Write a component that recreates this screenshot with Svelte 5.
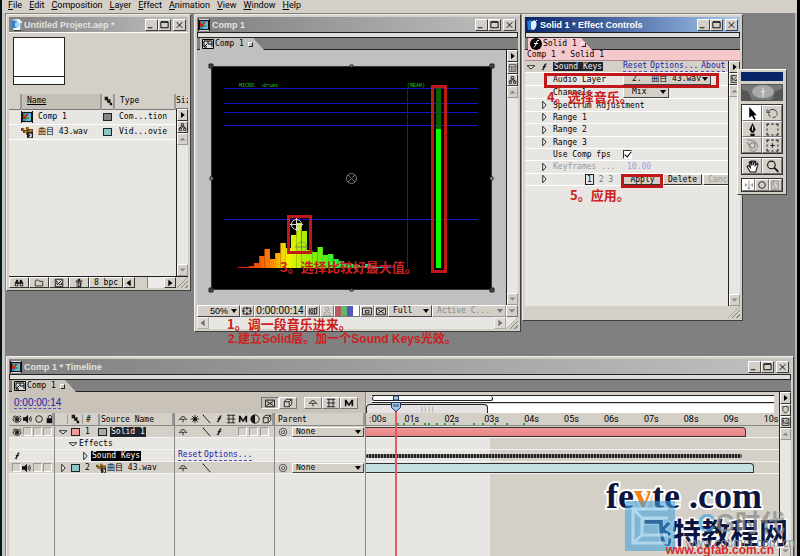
<script lang="ts">
  type Shape = { d: string; fill?: string; stroke?: string };

  const menus = ["File", "Edit", "Composition", "Layer", "Effect", "Animation", "View", "Window", "Help"];

  const icons: Record<string, Shape[]> = {
    comp: [
      { d: "M0 0h12v12H0z", fill: "#111" },
      { d: "M2 2h8v8H2z", fill: "#3a8fd0" },
      { d: "M2 3h5v5H2z", fill: "#c22" },
      { d: "M6 5l4-3v8H5z", fill: "#6bd" },
      { d: "M3 3h2v2H3zM5 6h3v2H5z", fill: "#3a3" },
      { d: "M1 .5h10M1 11.5h10", stroke: "#ddd" },
    ],
    project: [
      { d: "M1 1l8-1 3 3v8l-8 1z", fill: "#f4f8fc" },
      { d: "M1 1l6 1v7H2z", fill: "#2a7fc8" },
      { d: "M5 4c3-3 5 0 4 3s-4 2-4 0z", fill: "#9cd4f4" },
      { d: "M4 11.5h7V4", stroke: "#333" },
    ],
    solid: [
      { d: "M1 2l5-1v10H2z", fill: "#2878c8" },
      { d: "M5 3c4-3 7 0 5 5s-5 3-5 0z", fill: "#d8f0ff" },
      { d: "M8 1l1 2 2-2", stroke: "#fff" },
    ],
    wav: [
      { d: "M0 2h3v2h2V1h3v2h4v4H9v2H5V7H2V5H0z", fill: "#6e4a18" },
      { d: "M2 3h2M6 2h2M8 5h3M4 6h2", stroke: "#e0a33a" },
      { d: "M6 6h6v6H6z", fill: "#222" },
      { d: "M8 8h2v3H8M10 8v3", stroke: "#eee" },
    ],
    tab: [
      { d: "M.5 1.5h11v9H.5z", fill: "#ddd", stroke: "#000" },
      { d: "M2 3h4v3h4v3M2 9l3-3M6 3h4v3M2 3v6h3", stroke: "#000" },
    ],
    fx: [
      { d: "M6 0a6 6 0 110 12A6 6 0 016 0z", fill: "#000" },
      { d: "M9 2.500q-2-1-2.500 2T4 9.500M4 5.500h4", stroke: "#fff" },
    ],
    f: [{ d: "M9 2.500q-2-1-2.700 2T3.500 9.500M4.500 5.500h4M8 2L5 10", stroke: "#000" }],
    down: [{ d: "M1.500 4.500h9L6 8.500z", fill: "#fff", stroke: "#000" }],
    right: [{ d: "M4.500 1.500v9L8.500 6z", fill: "#fff", stroke: "#000" }],
    play: [{ d: "M4 2v8l5-4z", fill: "#000" }],
    back: [{ d: "M8 2v8L3 6z", fill: "#000" }],
    up: [{ d: "M2 8h8L6 4z", fill: "#888" }],
    low: [{ d: "M2 4h8L6 8z", fill: "#888" }],
    tree: [{ d: "M4.500 1.500h3v3h-3zM1.500 7.500h3v3h-3zM7.500 7.500h3v3h-3zM6 4.500V6M3 7.500V6h6v1.500", stroke: "#000" }],
    panel: [{ d: "M1.500 1.500h9v9h-9zM1.500 4.500h9M4.500 5v5", stroke: "#333" }, { d: "M5 5h5v5H5z", fill: "#999" }],
    check: [{ d: "M1.500 1.500h9v9h-9zM3 3l1 5M4 8l5-5M6 8h3V6", stroke: "#000" }],
    label: [{ d: "M2 1h4v4H2zM5 4h4v4H5zM8 8h3v3H8z", fill: "#111" }, { d: "M3 2h1v1H3zM6 5h1v1H6z", fill: "#c33" }],
    find: [{ d: "M1 6l2-4h2v8H1zM7 2h2l2 4v4H7zM5 5h2v2H5z", fill: "#111" }, { d: "M2 7h2v2H2zM8 7h2v2H8z", fill: "#ddd" }],
    folder: [{ d: "M1.500 9.500v-6l1-1h3l1 1.500h4v5.500z", stroke: "#222" }],
    trash: [{ d: "M2 3h8v1.500H2zM4.500 1h3v2h-3zM3 5h6l-.5 6h-5z", fill: "#222" }, { d: "M4.500 6v4M6.500 6v4", stroke: "#ccc" }],
    safe: [{ d: "M1.500 2.500h9v7h-9zM6 1v4M6 7v4M0 6h4M8 6h4", stroke: "#000" }],
    camera: [{ d: "M1.500 3.500h7l2-2v8h-9zM8 3v7", stroke: "#000" }, { d: "M4.500 5a1.500 1.500 0 110 3 1.500 1.500 0 010-3z", stroke: "#000" }],
    person: [{ d: "M6 1.500a2 2 0 110 4 2 2 0 010-4zM2 11q0-4 4-4t4 4z", stroke: "#999" }],
    region: [{ d: "M.5 2.500h11v8H.5zM4 5.500h4.500v3H4z", stroke: "#000" }],
    alpha: [{ d: "M.5 2.500h11v8H.5zM2 4l8 5M10 4L2 9", stroke: "#000" }],
    eye: [{ d: "M1 7q5-8 10 0-5 6-10 0zM1 4l3-2M9 2l2 2", stroke: "#000" }, { d: "M6 4a2.500 2.500 0 110 5 2.500 2.500 0 010-5z", fill: "#222" }],
    sound: [{ d: "M0 4h3l3-3v10L3 8H0z", fill: "#111" }, { d: "M7.500 4v4M9 2.500q2 3.500 0 7", stroke: "#111" }],
    ring: [{ d: "M6 2a4 4 0 110 8 4 4 0 010-8z", stroke: "#111" }],
    lock: [{ d: "M2 5h8v6H2z", fill: "#111" }, { d: "M4 5V2.500q2-2 4 0V5", stroke: "#111" }],
    shy: [{ d: "M1 6.500h2Q3 3 6 3t3 3.500h2M4 6.500h4M6 7v3", stroke: "#111" }],
    sun: [{ d: "M6 1v10M1 6h10M2.500 2.500l7 7M9.500 2.500l-7 7", stroke: "#111" }, { d: "M4 4h4v4H4z", fill: "#111" }],
    line: [{ d: "M1 1l9 10M1.500 1.500h1", stroke: "#000" }],
    film: [{ d: "M1 1.500h10M1 10.500h10M3.500 1v10M8.500 1v10M1 6h10", stroke: "#111" }],
    blur: [{ d: "M1 10V2h2l3 5 3-5h2v8H9V6l-3 4-3-4v4z", fill: "#111" }],
    half: [{ d: "M6 1a5 5 0 110 10A5 5 0 016 1z", stroke: "#111" }, { d: "M6 1a5 5 0 000 10z", fill: "#111" }],
    cube: [{ d: "M1.500 4.500h6v6h-6zM4 1.500h6.500v6M1.500 4.500l2.500-3M7.500 4.500l3-3M7.500 10.500l3-3", stroke: "#111" }],
    whip: [{ d: "M6 1.500a4.500 4.500 0 110 9 4.500 4.500 0 010-9zM6 4a2 2 0 11-2 2q0-1 2-1", stroke: "#444" }],
    shield: [{ d: "M2.500 1.500h7v5L6 10.500 2.500 6.500z", stroke: "#222" }],
    select: [{ d: "M3 0v10l2.500-2 2 4 1.500-1-2-3.500h3z", fill: "#000" }],
    rotate: [{ d: "M2 5a4 4 0 118 3M9 9l-3 1M2 6l2 3M1 2v3h3", stroke: "#555" }],
    pen: [{ d: "M6 0L3 6l2 3h2l2-3zM4 10h4v2H4z", fill: "#111" }, { d: "M6 3v4", stroke: "#ddd" }],
    rect: [{ d: "M1 3V1h2M5 1h2M9 1h2v2M11 5v2M11 9v2H9M7 11H5M3 11H1V9M1 7V5", stroke: "#222" }],
    orbit: [{ d: "M6 3.500a2.500 2.500 0 110 5 2.500 2.500 0 010-5zM1 3l3 5M1 1q9-1 10 7M3 10q5 3 7-1", stroke: "#888" }],
    pan: [{ d: "M1 3V1h2M5 1h2M9 1h2v2M11 5v2M11 9v2H9M7 11H5M3 11H1V9M1 7V5M4 6h4M6 4v4", stroke: "#222" }],
    hand: [{ d: "M4 11L1 6l1-1 2 2-1-5 1-.5L5 5V1h1.500v4L8 1l1 .5L8.500 5l2-2 .5 1-2 7z", fill: "#fff", stroke: "#111" }],
    lens: [{ d: "M5 1a3.500 3.500 0 110 7 3.500 3.500 0 010-7zM7.500 7.500l4 4M8 7l3.500 3.500", stroke: "#111" }],
    axis: [{ d: "M6 1v10M1 6h3M8 6h3M2 4v4M10 4v4M4 9l2 2 2-2", stroke: "#777" }],
    view: [{ d: "M2 1h8v10H2zM4 1v6l3 3M7 3l3 3", stroke: "#888" }],
  };

  const footage = [
    { name: "Comp 1", icon: "comp", type: "Com...tion", color: "#858585" },
    { name: "曲目 43.wav", icon: "wav", type: "Vid...ovie", color: "#8cc8c8" },
  ];

  const tools = ["select", "rotate", "pen", "rect", "orbit", "pan"];
  const seconds = [":00s", "01s", "02s", "03s", "04s", "05s", "06s", "07s", "08s", "09s", "10s"];
  const ranges = ["Spectrum Adjustment", "Range 1", "Range 2", "Range 3"];
  const markers = [7.5, 9, 11.5, 14, 15, 17, 19, 21, 26, 28, 31, 34, 38];

  // heights of the spectrum columns, left to right
  const spectrum = [1, 1, 2, 5, 12, 19, 9, 15, 25, 20, 33, 45, 37, 18, 16, 21, 13, 14, 9, 7, 5, 4, 3, 2, 4, 2, 1, 1, 1];

  let useFps = $state(true);
  let currentTime = $state("0:00:00:14");
</script>

{#snippet icon(name: string)}
  <svg class="icon" viewBox="0 0 12 12" aria-hidden="true">
    {#each icons[name] as s}
      <path d={s.d} fill={s.fill ?? "none"} stroke={s.stroke ?? "none"} />
    {/each}
  </svg>
{/snippet}

{#snippet titlebar(title: string, name: string)}
  <header class="titlebar">
    {@render icon(name)}
    <h2>{title}</h2>
    <button aria-label="Minimize"><svg viewBox="0 0 12 10"><path d="M2 8h5" /></svg></button>
    <button aria-label="Maximize"><svg viewBox="0 0 12 10"><path d="M2 2h8v6H2zM2 1.500h8" /></svg></button>
    <button class="close" aria-label="Close"><svg viewBox="0 0 12 10"><path d="M3 2l6 6M9 2L3 8" /></svg></button>
  </header>
{/snippet}

{#snippet tabstrip(title: string, name: string)}
  <div class="groove"></div>
  <div class="tabs">
    <button class="tab">{@render icon(name)}{title}<i></i></button>
  </div>
{/snippet}

{#snippet scroller(names: string[])}
  <div class="scroller">
    {#each names as name}
      <button aria-label={name}>{@render icon(name)}</button>
    {/each}
    <button aria-label="Scroll up" class="flat">{@render icon("up")}</button>
    <span class="fill"></span>
    <button aria-label="Scroll down" class="flat">{@render icon("low")}</button>
  </div>
{/snippet}

<main>
  <nav>
    {#each menus as m}
      <button><u>{m[0]}</u>{m.slice(1)}</button>
    {/each}
  </nav>

  <section class="window project">
    {@render titlebar("Untitled Project.aep *", "project")}
    <div class="preview"><div class="thumb"></div></div>
    <div class="split">
      <div class="list">
        <table>
          <thead>
            <tr><th></th><th class="sorted">Name</th><th>{@render icon("label")}</th><th>Type</th></tr>
          </thead>
          <tbody>
            {#each footage as item}
              <tr>
                <td></td>
                <td><span class="cell">{@render icon(item.icon)}{item.name}</span></td>
                <td><b class="swatch" style="background: {item.color}"></b></td>
                <td>{item.type}</td>
              </tr>
            {/each}
          </tbody>
        </table>
      </div>
      <div class="side">
        <div class="size">Siz</div>
        {@render scroller(["play", "tree"])}
      </div>
    </div>
    <footer class="bar">
      {#each ["find", "folder", "check", "trash"] as name}
        <button aria-label={name}>{@render icon(name)}</button>
      {/each}
      <button class="depth">8 bpc</button>
      <button class="arrow" aria-label="Scroll left">{@render icon("back")}</button>
      <span class="thumbtrack"></span>
      <button class="arrow" aria-label="Scroll right">{@render icon("play")}</button>
      <span class="grip"></span>
    </footer>
  </section>

  <section class="window comp">
    {@render titlebar("Comp 1", "comp")}
    {@render tabstrip("Comp 1", "tab")}
    <div class="split">
      <div class="viewer">
        <svg viewBox="0 0 281 224">
          <defs>
            <linearGradient id="heat" gradientUnits="userSpaceOnUse" x1="28" y1="0" x2="180" y2="0">
              <stop offset="0" stop-color="#e01010" />
              <stop offset=".22" stop-color="#ff8c00" />
              <stop offset=".32" stop-color="#f4f000" />
              <stop offset=".5" stop-color="#80f000" />
              <stop offset=".7" stop-color="#00f050" />
              <stop offset=".9" stop-color="#30e8d0" />
              <stop offset="1" stop-color="#2040f0" />
            </linearGradient>
          </defs>
          <rect width="281" height="224" />
          <path d="M13 22.500h254M13 37.500h254M13 46.500h254M13 59.500h254M13 153.500h254M196.500 22v180" fill="none" stroke="#1814cc" />
          <text x="28" y="21">MICRO. -drums</text>
          <text x="196" y="21">(MEAN)</text>
          <g fill="url(#heat)">
            {#each spectrum as h, i}
              <rect x={27 + i * 5.3} y={202 - h} width="5.4" height={h} />
            {/each}
          </g>
          <rect x="225" y="22" width="5" height="41" fill="#086008" />
          <rect x="225" y="63" width="5" height="139" fill="#0f0" />
          <g fill="none" stroke="#ddd">
            <circle cx="85.500" cy="158.500" r="5" />
            <path d="M85.500 152v13M79 158.500h13" />
            <circle cx="90.500" cy="181" r="5" stroke="#8a6" />
            <path d="M90.500 164v23M84 181h13" stroke="#684" />
            <circle cx="140.500" cy="112.500" r="5" stroke="#777" />
            <path d="M137 109l7 7M144 109l-7 7" stroke="#777" />
          </g>
          <path d="M.5 0v224M0 .5h281M0 223.500h281M280.500 0v224" stroke="#333" />
          <path d="M-2-2h4v4h-4zM279-2h4v4h-4zM-2 222h4v4h-4zM279 222h4v4h-4z" fill="#444" stroke="#222" />
          <path d="M139-1h3v2h-3zM139 223h3v2h-3zM-1 111h3v3h-3zM279 111h3v3h-3z" fill="#aaa" stroke="#222" />
        </svg>
      </div>
      {@render scroller(["play", "panel", "tree"])}
    </div>
    <div class="bar status">
      <label class="drop zoom"><select aria-label="Magnification"><option>50%</option></select></label>
      <button aria-label="Safe areas">{@render icon("safe")}</button>
      <button class="time">{currentTime}</button>
      <button aria-label="Snapshot">{@render icon("camera")}</button>
      <button aria-label="Show snapshot">{@render icon("person")}</button>
      <button class="rgb" aria-label="Channels"></button>
      <button aria-label="Region">{@render icon("region")}</button>
      <button aria-label="Transparency">{@render icon("alpha")}</button>
      <label class="drop full"><select aria-label="Resolution"><option>Full</option></select></label>
      <label class="drop camera"><select aria-label="View" disabled><option>Active C...</option></select></label>
      <button class="arrow" aria-label="More">{@render icon("low")}</button>
    </div>
    <div class="bar hscroll">
      <button class="arrow" aria-label="Scroll left">{@render icon("back")}</button>
      <span class="fill"></span>
      <button class="arrow" aria-label="Scroll right">{@render icon("play")}</button>
      <span class="grip"></span>
    </div>
  </section>

  <section class="window effects">
    {@render titlebar("Solid 1 * Effect Controls", "solid")}
    {@render tabstrip("Solid 1", "fx")}
    <div class="path">Comp 1 * Solid 1</div>
    <div class="split">
      <div class="params">
        <div class="rows">
          <div class="row head">
            <span class="twirls">{@render icon("down")}{@render icon("f")}</span>
            <span><mark>Sound Keys</mark></span>
            <span class="links"><a href="#reset">Reset</a><a href="#options">Options...</a><a href="#about" class="about">About</a></span>
          </div>
          <div class="row">
            <span></span><label for="audio">Audio Layer</label>
            <span class="drop audio"><select id="audio"><option>2.&nbsp; 曲目 43.wav</option></select></span>
          </div>
          <div class="row">
            <span></span><label for="channel">Channels</label>
            <span class="drop mix"><select id="channel"><option>Mix</option></select></span>
          </div>
          {#each ranges as name}
            <div class="row"><span class="twirls">{@render icon("right")}</span><span>{name}</span></div>
          {/each}
          <div class="row">
            <span></span><label for="fps">Use Comp fps</label>
            <input id="fps" type="checkbox" bind:checked={useFps} />
          </div>
          <div class="row dim"><span class="twirls">{@render icon("right")}</span><span>Keyframes ...</span><span class="value">10.00</span></div>
          <div class="row">
            <span class="twirls">{@render icon("right")}</span>
            <span class="pages"><b>1</b> 2 3</span>
            <span class="actions"><button>Apply</button><button>Delete</button><button disabled>Cancel</button></span>
          </div>
        </div>
      </div>
      {@render scroller(["play", "check"])}
    </div>
    <div class="bar"><span class="fill"></span><span class="grip"></span></div>
  </section>

  <aside class="toolbox">
    <div class="cap"></div>
    <svg class="photo" viewBox="0 0 40 16" preserveAspectRatio="none">
      <rect width="40" height="16" fill="#777" />
      <ellipse cx="21" cy="7" rx="11" ry="7" fill="#aaa" />
      <path d="M21 3v10M19 7h4" stroke="#eee" />
      <path d="M0 5l6 2 4 9H0zM40 4l-7 3-3 9h10z" fill="#555" />
    </svg>
    <div class="grid">
      {#each tools as t, i}<button aria-label={t} class:on={i === 0}>{@render icon(t)}</button>{/each}
    </div>
    <div class="grid">
      {#each ["hand", "lens"] as t}<button aria-label={t}>{@render icon(t)}</button>{/each}
    </div>
    <div class="grid three">
      {#each ["axis", "ring", "view"] as t, i}<button aria-label={t} class:on={i === 0}>{@render icon(t)}</button>{/each}
    </div>
  </aside>

  <section class="window timeline">
    {@render titlebar("Comp 1 * Timeline", "comp")}
    {@render tabstrip("Comp 1", "tab")}
    <div class="split">
      <div class="layers">
        <div class="tools">
          <a href="#time">{currentTime}</a>
          <span class="group">
            <button aria-label="Live update" class="in">{@render icon("alpha")}</button>
            <button aria-label="Draft 3D">{@render icon("cube")}</button>
          </span>
          <span class="group">
            <button aria-label="Hide shy">{@render icon("shy")}</button>
            <button aria-label="Frame blending">{@render icon("film")}</button>
            <button aria-label="Motion blur">{@render icon("blur")}</button>
          </span>
        </div>
        <div class="columns">
          <div class="col av">
            <div class="th">{@render icon("eye")}{@render icon("sound")}{@render icon("ring")}{@render icon("lock")}</div>
            <div class="tr tint">{@render icon("eye")}<i></i><i></i><i></i></div>
            <div class="tr"></div>
            <div class="tr">{@render icon("f")}</div>
            <div class="tr tint"><i></i>{@render icon("sound")}<i></i><i></i></div>
          </div>
          <div class="col source">
            <div class="th"><span class="gap"></span><span class="lab">{@render icon("label")}</span><span class="num">#</span><span>Source Name</span></div>
            <div class="tr tint">{@render icon("down")}<b class="swatch pink"></b><span class="no">1</span><b class="swatch grey"></b><mark>Solid 1</mark></div>
            <div class="tr deep">{@render icon("down")}Effects</div>
            <div class="tr deeper">{@render icon("right")}<mark class="black">Sound Keys</mark></div>
            <div class="tr tint">{@render icon("right")}<b class="swatch teal"></b><span class="no">2</span>{@render icon("wav")}<span>曲目 43.wav</span></div>
          </div>
          <div class="col switches">
            <div class="th">{#each ["shy", "sun", "line", "f", "film", "blur", "half", "cube"] as n}{@render icon(n)}{/each}</div>
            <div class="tr tint">{@render icon("shy")}<s></s>{@render icon("line")}{@render icon("f")}<s></s><i></i><i></i><i></i></div>
            <div class="tr"></div>
            <div class="tr"><a href="#fx-reset">Reset</a><a href="#fx-options">Options...</a></div>
            <div class="tr tint">{@render icon("shy")}<s></s>{@render icon("line")}</div>
          </div>
          <div class="col parent">
            <div class="th">Parent</div>
            <div class="tr tint">{@render icon("whip")}<label class="drop"><select aria-label="Parent of layer 1"><option>None</option></select></label></div>
            <div class="tr"></div>
            <div class="tr"></div>
            <div class="tr tint">{@render icon("whip")}<label class="drop"><select aria-label="Parent of layer 2"><option>None</option></select></label></div>
          </div>
        </div>
      </div>
      <div class="tracks">
        <div class="navigator"><div class="range"></div></div>
        <div class="work"><span>||||</span></div>
        <div class="ruler">
          <div class="seconds">{#each seconds as s}<span>{s}</span>{/each}</div>
          {#each markers as m}<i style="left: {m}%"></i>{/each}
        </div>
        <div class="lanes">
          <div class="lane"><div class="clip rose"></div></div>
          <div class="lane"></div>
          <div class="lane"><div class="keys"></div></div>
          <div class="lane"><div class="clip aqua"></div></div>
        </div>
        <div class="playhead">
          <svg viewBox="0 0 12 18"><path d="M3.500 1h5v4h-5zM1.500 7.500h9v5L6 16.500 1.500 12.500z" fill="#a4cdec" stroke="#235" /><path d="M4 9v3M6 9v3M8 9v3" stroke="#246" /></svg>
        </div>
      </div>
      {@render scroller(["play", "shield", "check"])}
    </div>
  </section>

  <div class="box meter"></div>
  <div class="box peak"></div>
  <div class="box layer"></div>
  <div class="box apply"></div>
  <p class="note n1">1。调一段音乐进来。</p>
  <p class="note n2">2.建立Solid层。加一个Sound Keys光效。</p>
  <p class="note n3">3。选择比较好最大值。</p>
  <p class="note n4">4。选择音乐。</p>
  <p class="note n5">5。应用。</p>

  <div class="brand fevte">fe<em>v</em>te .com</div>
  <div class="brand school">飞特教程网</div>
  <svg class="logo" viewBox="0 0 50 50">
    <path d="M0 0h50v50H0z" fill="#48a4dc" opacity=".6" />
    <path d="M43 8H8v34h35M17 17h26M17 17v17h26M8 8l9 9M8 42l9-8" fill="none" stroke="#c4e6f8" stroke-width="3" opacity=".7" />
  </svg>
  <div class="brand cg"><em>C</em>G时代</div>
  <div class="brand timer">www.cgtimer.com.cn</div>
  <div class="brand lab-url">www.cgfab.com.cn</div>
</main>

<style>
  :global(body) {
    margin: 0;
  }

  main {
    position: relative;
    min-height: 100vh;
    overflow: hidden;
    box-sizing: border-box;
    border-left: 2px solid #041418;
    border-right: 3px solid #000;
    background: #808080;
    box-shadow: inset 3px 0 #c8c4c2, inset -2px 0 #b8b8b8;
    font: 8px/12px "DejaVu Sans Mono", "Noto Sans CJK SC", monospace;
    color: #000;
  }

  main :global(*) {
    box-sizing: border-box;
  }

  button,
  select,
  input {
    margin: 0;
    padding: 0;
    border: 0;
    font: inherit;
    color: inherit;
    background: none;
    border-radius: 0;
  }

  a {
    color: #2020a8;
    text-decoration: none;
    border-bottom: 1px dashed #5050b8;
    line-height: 10px;
  }

  mark {
    padding: 0 1px;
    background: #20242c;
    color: #f0f0f0;
    line-height: 10px;
  }

  .icon {
    display: block;
    flex: none;
    width: 10px;
    height: 10px;
  }

  nav {
    display: flex;
    gap: 7px;
    height: 13px;
    padding-left: 6px;
    background: #d4d0c8;
    font: 9px/10px Roboto, sans-serif;
  }

  nav button {
    height: 10px;
  }

  .window {
    position: absolute;
    display: flex;
    flex-direction: column;
    padding: 2px;
    border: 1px solid;
    border-color: #f0eeea #404040 #404040 #f0eeea;
    background: #d4d0c8;
  }

  .project {
    left: 4px;
    top: 14px;
    width: 185px;
    height: 277px;
  }

  .comp {
    left: 192px;
    top: 14px;
    width: 327px;
    height: 318px;
  }

  .effects {
    left: 520px;
    top: 14px;
    width: 221px;
    height: 307px;
  }

  .timeline {
    left: 4px;
    right: 3px;
    top: 356px;
    bottom: -4px;
  }

  .titlebar {
    display: flex;
    flex: none;
    align-items: center;
    height: 15px;
    padding: 0 2px 0 1px;
    background: linear-gradient(90deg, #808080, #c0c0c0);
  }

  .effects .titlebar {
    background: linear-gradient(90deg, #0a246a, #a6caf0);
  }

  .titlebar .icon,
  .tab .icon {
    width: 12px;
    height: 12px;
  }

  .titlebar h2 {
    flex: 1;
    margin: 0 0 0 2px;
    overflow: hidden;
    white-space: nowrap;
    color: #e4e2de;
    font: bold 9px/14px "Liberation Sans", sans-serif;
  }

  .effects .titlebar h2 {
    color: #fff;
  }

  .titlebar button {
    width: 13px;
    height: 12px;
    border: 1px solid;
    border-color: #fff #404040 #404040 #fff;
    background: #d4d0c8;
  }

  .titlebar button svg {
    display: block;
    width: 11px;
    height: 10px;
    fill: none;
    stroke: #000;
  }

  .titlebar .close {
    margin-left: 2px;
  }

  .groove {
    flex: none;
    height: 6px;
    border: 1px solid #222;
    background: #e0dedb;
  }

  .tabs {
    flex: none;
    height: 12px;
    padding-left: 3px;
    border-bottom: 1px solid #222;
    background: #808080;
  }

  .tab {
    display: flex;
    align-items: center;
    gap: 1px;
    width: 64px;
    height: 12px;
    padding-left: 2px;
    background: #c0c0c0;
    white-space: nowrap;
    clip-path: polygon(0 0, 53px 0, 100% 100%, 0 100%);
  }

  .tab i {
    width: 5px;
    height: 5px;
    margin-left: 3px;
    border: 1px solid;
    border-color: #fff #222 #222 #fff;
  }

  .effects .tab,
  .path {
    background: #f4c8cc;
  }

  .timeline .tab {
    background: #c8c4bc;
  }

  .split {
    display: flex;
    flex: 1;
    min-height: 0;
  }

  .scroller {
    display: flex;
    flex: none;
    flex-direction: column;
    width: 12px;
    border-left: 1px solid #222;
    background: #e8e6e3;
  }

  .scroller button {
    flex: none;
    width: 11px;
    height: 12px;
    border: 1px solid;
    border-color: #fff #333 #333 #fff;
    background: #d4d0c8;
  }

  .scroller .icon {
    width: 9px;
    height: 10px;
  }

  .scroller .flat {
    border-color: #fff #999 #999 #fff;
  }

  .fill {
    flex: 1;
  }

  .bar {
    display: flex;
    flex: none;
    height: 12px;
    background: #d4d0c8;
  }

  .bar button {
    display: flex;
    align-items: center;
    justify-content: center;
    border: 1px solid;
    border-color: #fff #333 #333 #fff;
  }

  .grip {
    width: 12px;
    background: repeating-linear-gradient(135deg, #d4d0c8 0 2px, #888 2px 3px);
    clip-path: polygon(100% 0, 100% 100%, 0 100%);
  }

  .drop {
    position: relative;
    display: flex;
    border: 1px solid;
    border-color: #fff #444 #444 #fff;
    background: #d4d0c8;
  }

  .drop select {
    width: 100%;
    appearance: none;
    line-height: 10px;
    white-space: nowrap;
  }

  .drop::after {
    content: "";
    position: absolute;
    right: 2px;
    top: 3px;
    border: 3px solid transparent;
    border-top: 4px solid #000;
    border-bottom: 0;
    pointer-events: none;
  }

  .preview {
    flex: none;
    height: 62px;
    padding: 4px;
    border-top: 1px solid #fff;
  }

  .thumb {
    width: 52px;
    height: 48px;
    border: 1px solid #222;
    background: linear-gradient(#222, #222) 0 38px / 100% 1px no-repeat #fff;
  }

  .list {
    flex: 1;
    background: #e8e6e3;
  }

  table {
    width: 100%;
    table-layout: fixed;
    border-collapse: collapse;
  }

  th {
    height: 15px;
    padding: 0 0 0 5px;
    border-right: 2px solid #999;
    border-bottom: 1px solid #777;
    background: #d4d0c8;
    font-weight: normal;
    text-align: left;
  }

  th:nth-child(1) {
    width: 12px;
  }

  th:nth-child(2) {
    width: 80px;
  }

  th:nth-child(3) {
    width: 13px;
    padding: 0 1px;
  }

  th.sorted {
    background: #c4c0b8;
    text-decoration: underline;
  }

  td {
    height: 15px;
    padding: 0;
    border-bottom: 1px solid #fff;
    white-space: nowrap;
  }

  td:last-child {
    padding-left: 5px;
  }

  .cell {
    display: flex;
    align-items: center;
    gap: 5px;
    height: 14px;
    line-height: 14px;
  }

  .cell .icon {
    width: 12px;
    height: 12px;
  }

  .swatch {
    display: block;
    flex: none;
    width: 9px;
    height: 8px;
    margin: 0 2px;
    border: 1px solid #222;
  }

  .side {
    display: flex;
    flex-direction: column;
    width: 12px;
  }

  .size {
    height: 15px;
    overflow: hidden;
    border-bottom: 1px solid #777;
    line-height: 14px;
  }

  .side .scroller {
    flex: 1;
  }

  .project .bar {
    border-top: 1px solid #222;
  }

  .project .bar button {
    width: 20px;
  }

  .project .bar .depth {
    width: 34px;
  }

  .bar .arrow,
  .project .bar .arrow {
    width: 12px;
  }

  .thumbtrack {
    flex: 1;
    background: linear-gradient(90deg, #d4d0c8 12px, #888 12px 13px, #eceae8 13px);
  }

  .viewer {
    flex: 1;
    padding: 16px 14px;
    background: #c0c0c0;
  }

  .viewer svg {
    display: block;
    width: 281px;
    height: 224px;
    overflow: visible;
  }

  .viewer text {
    fill: #20c020;
    font: 5px "Liberation Mono", monospace;
  }

  .status button {
    width: 14px;
    border-color: #fff #777 #777 #fff;
  }

  .status .time {
    width: 52px;
    font: 10px/10px "Liberation Sans", sans-serif;
  }

  .status .zoom {
    width: 43px;
    padding-left: 12px;
    font: 9px/10px "Liberation Sans", sans-serif;
  }

  .status .rgb {
    width: 26px;
    background: linear-gradient(90deg, #b85860 6px, #60b868 6px 12px, #5058c0 12px 18px, #fff 18px);
  }

  .status .full {
    width: 44px;
    padding-left: 4px;
  }

  .status .camera {
    flex: 1;
    padding-left: 4px;
    border-color: #fff #999 #999 #fff;
    color: #888;
  }

  .status .camera::after {
    border-top-color: #777;
  }

  .status .camera select {
    opacity: 1;
  }

  .hscroll {
    background: #e8e6e3;
  }

  .hscroll .arrow {
    border-color: #fff #777 #777 #fff;
    background: #d4d0c8;
    opacity: 0.5;
  }

  .path {
    flex: none;
    height: 11px;
    padding-left: 2px;
    border-bottom: 1px solid #a88;
    line-height: 10px;
  }

  .params {
    flex: 1;
    min-width: 0;
    overflow: hidden;
    background: #e8e6e3;
  }

  .rows {
    display: grid;
    grid-template-rows: repeat(10, 1fr);
    height: 125px;
  }

  .row {
    display: grid;
    grid-template-columns: 28px 70px 1fr;
    align-items: center;
    border-bottom: 1px solid #fff;
    line-height: 11px;
    white-space: nowrap;
  }

  .row.head {
    background: #d4d0c8;
  }

  .twirls {
    display: flex;
    justify-content: flex-end;
    gap: 3px;
    padding-right: 4px;
  }

  .links {
    display: flex;
    gap: 3px;
  }

  .row .drop {
    height: 12px;
    padding-left: 8px;
  }

  .audio {
    width: 88px;
  }

  .mix {
    width: 46px;
  }

  .row input {
    position: relative;
    appearance: none;
    width: 9px;
    height: 9px;
    border: 1px solid;
    border-color: #333 #fff #fff #333;
    background: #fff;
  }

  .row input:checked::after {
    content: "";
    position: absolute;
    left: 2px;
    top: -1px;
    width: 3px;
    height: 6px;
    border: solid #000;
    border-width: 0 1px 1px 0;
    transform: rotate(40deg);
  }

  .dim {
    color: #999;
  }

  .value {
    padding-left: 4px;
    color: #a0a0e0;
  }

  .pages {
    padding-left: 32px;
    color: #777;
  }

  .pages b {
    padding: 0 1px;
    border: 1px solid #222;
    color: #111;
    font-weight: normal;
  }

  .actions {
    display: flex;
    gap: 1px;
  }

  .actions button {
    flex: none;
    width: 39px;
    height: 11px;
    border: 1px solid;
    border-color: #fff #333 #333 #fff;
    background: #d4d0c8;
    line-height: 9px;
  }

  .actions button:disabled {
    color: #999;
  }

  .toolbox {
    position: absolute;
    left: 735px;
    top: 69px;
    display: flex;
    flex-direction: column;
    gap: 3px;
    width: 50px;
    padding: 2px 3px;
    border: 1px solid;
    border-color: #fff #404040 #404040 #fff;
    background: #d4d0c8;
  }

  .cap {
    height: 9px;
    background: #0a246a;
  }

  .photo {
    width: 100%;
    height: 17px;
    border: 1px solid #555;
  }

  .grid {
    display: grid;
    grid-template-columns: 1fr 1fr;
    border: 1px solid #333;
  }

  .grid button {
    display: grid;
    place-items: center;
    height: 16px;
    border: 1px solid;
    border-color: #fff #777 #777 #fff;
  }

  .grid .icon {
    width: 13px;
    height: 13px;
  }

  .three {
    grid-template-columns: 1fr 1fr 1fr;
  }

  .three button {
    height: 12px;
  }

  .three .icon {
    width: 10px;
    height: 10px;
  }

  .grid .on {
    background: #fff;
  }

  .layers {
    display: flex;
    flex: none;
    flex-direction: column;
    width: 357px;
    border-right: 1px solid #888;
  }

  .tools {
    display: flex;
    align-items: center;
    gap: 7px;
    height: 21px;
    padding: 0 7px 0 5px;
    background: #c8c2b8;
  }

  .tools a {
    margin-right: auto;
    font: 10px/11px "Liberation Sans", sans-serif;
  }

  .group {
    display: flex;
  }

  .group button {
    display: grid;
    place-items: center;
    width: 18px;
    height: 12px;
    border: 1px solid;
    border-color: #fff #777 #777 #fff;
    background: #d4d0c8;
  }

  .group .in {
    border-color: #777 #fff #fff #777;
    background: #c4c0b8;
  }

  .columns {
    display: flex;
    flex: 1;
    background: #e8e6e3;
  }

  .col {
    flex: none;
    border-right: 1px solid #888;
  }

  .av {
    width: 46px;
  }

  .source {
    width: 120px;
  }

  .switches {
    width: 100px;
  }

  .parent {
    flex: 1;
    min-width: 0;
    border-right: 0;
  }

  .th,
  .tr {
    display: flex;
    align-items: center;
    gap: 1px;
    height: 12px;
    padding-left: 3px;
    overflow: hidden;
    border-bottom: 1px solid #f4f2f0;
    line-height: 11px;
    white-space: nowrap;
  }

  .th {
    height: 13px;
    border-right: 2px solid #999;
    border-bottom-color: #888;
    background: #d4d0c8;
  }

  .tint {
    background: #d4d0c8;
  }

  .tr i {
    width: 9px;
    height: 9px;
    border: 1px solid;
    border-color: #999 #fff #fff #999;
  }

  .tr s {
    width: 10px;
  }

  .gap {
    width: 8px;
  }

  .lab {
    padding: 0 2px;
    border-right: 1px solid #999;
    border-left: 1px solid #999;
  }

  .num {
    width: 16px;
    padding-left: 2px;
    border-right: 2px solid #999;
  }

  .no {
    width: 12px;
    padding-left: 2px;
  }

  .pink {
    background: #f09c9c;
  }

  .grey {
    background: #aaa;
  }

  .teal {
    background: #8cc8c8;
  }

  .source .deep {
    padding-left: 13px;
  }

  .source .deeper {
    padding-left: 25px;
  }

  .black {
    background: #000;
    color: #fff;
  }

  .switches .th,
  .switches .tr {
    gap: 2px;
  }

  .parent .drop {
    width: 72px;
    height: 10px;
    margin-left: 3px;
    padding-left: 3px;
  }

  .parent .drop select {
    line-height: 8px;
  }

  .parent .drop::after {
    top: 2px;
  }

  .tracks {
    position: relative;
    flex: 1;
    display: flex;
    flex-direction: column;
    min-width: 0;
    overflow: hidden;
  }

  .navigator {
    height: 8px;
    margin: 3px 5px 0 6px;
    border: solid #222;
    border-width: 1px 0;
    background: #fff;
  }

  .range {
    width: 30%;
    height: 5px;
    border: solid #222;
    border-width: 0 1px 1px;
    border-radius: 3px;
  }

  .work {
    height: 9px;
    margin: 1px 5px 0 0;
    background: #fff;
  }

  .work span {
    display: block;
    width: 30%;
    height: 9px;
    border: 1px solid #222;
    border-bottom: 0;
    border-radius: 4px 4px 0 0;
    background: #e4e2e2;
    color: #888;
    font-size: 6px;
    line-height: 8px;
    text-align: center;
  }

  .ruler {
    position: relative;
    height: 13px;
    border-bottom: 1px solid #888;
    background: #d4d0c8;
  }

  .seconds {
    display: flex;
    margin: 0 -12px 0 -14px;
    font: 9px/12px Roboto, sans-serif;
  }

  .seconds span {
    flex: 1 1 0;
    text-align: center;
  }

  .seconds span:first-child {
    text-indent: 12px;
  }

  .ruler i {
    position: absolute;
    bottom: 0;
    width: 2px;
    height: 2px;
    background: #28a840;
  }

  .lanes {
    flex: 1;
    background: linear-gradient(90deg, #e8e6e3 30%, #d4d0c8 30%);
  }

  .lane {
    height: 12px;
    padding: 1px 0;
    border-bottom: 1px solid #f4f2f0;
  }

  .clip {
    height: 10px;
    border: 1px solid #333;
    border-left: 0;
    border-radius: 0 4px 0 0;
  }

  .rose {
    width: 92%;
    background: linear-gradient(#f09898, #e88484);
  }

  .aqua {
    width: 94%;
    background: #c4e0e0;
  }

  .keys {
    width: 91%;
    height: 4px;
    margin-top: 3px;
    border-radius: 2px;
    background: repeating-linear-gradient(90deg, #222 0 2px, #888 2px 3px);
  }

  .playhead {
    position: absolute;
    top: 18px;
    bottom: 0;
    left: 7%;
    width: 2px;
    background: #e85860;
  }

  .playhead svg {
    position: absolute;
    top: -15px;
    left: -5px;
    width: 12px;
    height: 18px;
  }

  .box {
    position: absolute;
    border: 3px solid #c01818;
    pointer-events: none;
  }

  .meter {
    left: 429px;
    top: 85px;
    width: 16px;
    height: 188px;
  }

  .peak {
    left: 285px;
    top: 215px;
    width: 25px;
    height: 39px;
  }

  .layer {
    left: 542px;
    top: 73px;
    width: 175px;
    height: 15px;
  }

  .apply {
    left: 619px;
    top: 174px;
    width: 42px;
    height: 14px;
  }

  .note {
    position: absolute;
    margin: 0;
    color: #cc2020;
    font: bold 13px/14px "Noto Sans CJK SC", sans-serif;
    white-space: nowrap;
  }

  .n1 {
    left: 225px;
    top: 317px;
  }

  .n2 {
    left: 226px;
    top: 332px;
    font: bold 12px/14px "Liberation Sans", "Noto Sans CJK SC", sans-serif;
  }

  .n3 {
    left: 278px;
    top: 260px;
  }

  .n4 {
    left: 545px;
    top: 90px;
  }

  .n5 {
    left: 568px;
    top: 188px;
  }

  .brand {
    position: absolute;
    white-space: nowrap;
  }

  .brand em {
    font-style: normal;
  }

  .fevte {
    right: 35px;
    bottom: 42px;
    color: #0c1440;
    font: bold 36px/36px "Liberation Serif", serif;
    -webkit-text-stroke: 4px #fff;
    paint-order: stroke fill;
  }

  .fevte em {
    color: #f48010;
  }

  .school {
    right: 9px;
    bottom: 7px;
    color: #0c1440;
    font: bold 29px/36px "Noto Sans CJK SC", sans-serif;
    -webkit-text-stroke: 3px #fff;
    paint-order: stroke fill;
  }

  .logo {
    position: absolute;
    right: 122px;
    bottom: 5px;
    width: 50px;
    height: 50px;
  }

  .cg {
    right: 12px;
    bottom: 19px;
    color: #888;
    font: bold 25px/28px "Liberation Sans", "Noto Sans CJK SC", sans-serif;
    opacity: 0.7;
  }

  .cg em {
    color: #48a4dc;
  }

  .timer {
    right: 2px;
    bottom: 7px;
    color: #888;
    font: 12px/12px "Liberation Sans", sans-serif;
  }

  .lab-url {
    right: 23px;
    bottom: 0;
    color: #d82828;
    font: bold 12px/12px "Liberation Sans", sans-serif;
  }
</style>
